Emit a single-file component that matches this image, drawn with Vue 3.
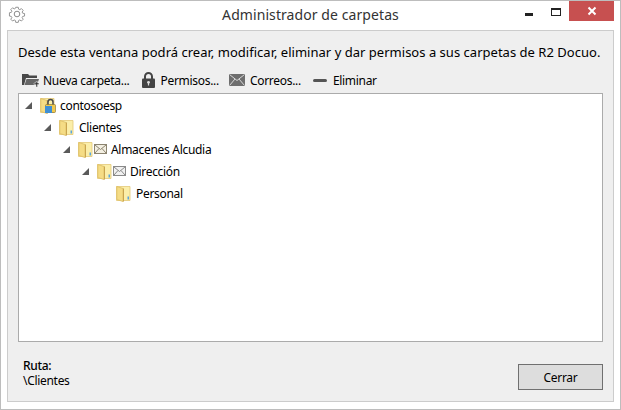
<script setup>
const folders = [
  { name: 'contosoesp', depth: 0, arrow: true, lock: true },
  { name: 'Clientes', depth: 1, arrow: true },
  { name: 'Almacenes Alcudia', depth: 2, arrow: true, mail: 'warm' },
  { name: 'Dirección', depth: 3, arrow: true, mail: 'grey' },
  { name: 'Personal', depth: 4 }
]
</script>

<template>
  <div class="window">
    <header class="titlebar">
      <svg class="gear" width="18" height="18" viewBox="0 0 18 18">
        <path d="M7.6 1.5h2.8l.4 2.1 1.3.6 1.8-1.2 2 2-1.2 1.8.6 1.3 2.1.4v2.8l-2.1.4-.6 1.3 1.2 1.8-2 2-1.8-1.2-1.3.6-.4 2.1H7.6l-.4-2.1-1.3-.6-1.8 1.2-2-2 1.2-1.8-.6-1.3-2.1-.4V7.6l2.1-.4.6-1.3-1.2-1.8 2-2 1.8 1.2 1.3-.6z" fill="none" stroke="#8a8a8a" stroke-linejoin="round" transform="translate(.9 .9) scale(.9)" />
        <circle cx="9" cy="9" r="2.800" fill="none" stroke="#8a8a8a" />
      </svg>
      <h1 class="title">Administrador de carpetas</h1>
      <div class="controls">
        <span class="min"></span>
        <span class="max"></span>
        <button class="close">
          <svg width="10" height="10" viewBox="0 0 10 10">
            <path d="M1.500 1.500l7 7M8.500 1.500l-7 7" stroke="#fff" stroke-width="2" />
          </svg>
        </button>
      </div>
    </header>

    <main class="content">
      <p class="intro">Desde esta ventana podrá crear, modificar, eliminar y dar permisos a sus carpetas de R2 Docuo.</p>

      <div class="toolbar">
        <span class="tool tool-new">
          <svg width="17" height="15" viewBox="0 0 17 15">
            <path d="M0 1h6l1.500 1.500H15V5H4L2 12H0z" fill="#484848" />
            <path d="M4.500 6H17l-2 6H2.500z" fill="#666" />
            <path d="M12 10h2V8.500h1.500V10H17v1.500h-1.500V14H14v-2.500h-2z" fill="#333" stroke="#efefef" stroke-width=".5" />
          </svg>
          Nueva carpeta...
        </span>
        <span class="tool tool-lock">
          <svg width="13" height="16" viewBox="0 0 13 16">
            <path d="M3 7V4.500a3.500 3.500 0 0 1 7 0V7" fill="none" stroke="#444" stroke-width="2" />
            <rect y="6.500" width="13" height="9.500" rx="1" fill="#444" />
            <circle cx="6.500" cy="10.300" r="1.400" fill="#ddd" />
            <rect x="5.900" y="10.500" width="1.200" height="3" fill="#ddd" />
          </svg>
          Permisos...
        </span>
        <span class="tool tool-mail">
          <svg width="16" height="12" viewBox="0 0 16 12">
            <rect width="16" height="12" fill="#6e6e6e" />
            <path d="M.5.5L8 6.500 15.500.5M.5 11.500L6 5M15.500 11.500L10 5" fill="none" stroke="#d8d8d8" />
          </svg>
          Correos...
        </span>
        <span class="tool tool-del">
          <span class="dash"></span>
          Eliminar
        </span>
      </div>

      <div class="tree">
        <div
          v-for="folder in folders"
          :key="folder.name"
          class="row"
          :style="{ paddingLeft: 6 + folder.depth * 19 + 'px' }"
        >
          <span class="arrow-slot">
            <svg v-if="folder.arrow" width="7" height="7" viewBox="0 0 7 7">
              <path d="M7 0v7H0z" fill="#5a5a5a" />
            </svg>
          </span>
          <span class="folder">
            <svg width="15" height="17" viewBox="0 0 15 17">
              <path d="M.5 1.500h13.500v14H.5z" fill="#fbeea9" stroke="#e3c877" stroke-width=".8" />
              <path d="M.8 1.500L7 3.500V16.500L.8 14.500z" fill="#f5dc85" stroke="#dcbd63" stroke-width=".8" />
              <path d="M7.500 3.500v13" stroke="#c9a44f" />
              <rect x="11.500" y="11.500" width="1.500" height="3" fill="#5aa5de" />
            </svg>
            <svg v-if="folder.lock" class="lock" width="11" height="15" viewBox="0 0 11 15">
              <path d="M3 7V4a2.500 2.500 0 0 1 5 0v3" fill="none" stroke="#4a4a4a" stroke-width="1.500" />
              <rect x=".5" y="6.500" width="10" height="8" rx="1" fill="#f2c94c" stroke="#7a6a30" stroke-width=".6" />
              <rect x="0" y="8" width="7" height="7" fill="#3f8fd4" />
            </svg>
          </span>
          <svg v-if="folder.mail" class="mail" width="13" height="10" viewBox="0 0 13 10">
            <rect x=".5" y=".5" width="12" height="9" :fill="folder.mail === 'warm' ? '#f3efe2' : '#f1f1f1'" :stroke="folder.mail === 'warm' ? '#8c8470' : '#8a8a8a'" />
            <path d="M1 1l5.500 4.500L12 1M1 9l4-4.500M12 9L8 4.500" fill="none" :stroke="folder.mail === 'warm' ? '#8c8470' : '#8a8a8a'" />
          </svg>
          <span class="name">{{ folder.name }}</span>
        </div>
      </div>

      <footer class="footer">
        <div class="path">
          <div class="path-label">Ruta:</div>
          <div>\Clientes</div>
        </div>
        <button class="btn">Cerrar</button>
      </footer>
    </main>
  </div>
</template>

<style>
html, body {
  margin: 0;
  background: #fff;
}
</style>

<style scoped>
.window {
  box-sizing: border-box;
  width: 621px;
  height: 410px;
  display: flex;
  flex-direction: column;
  padding: 0 6px 7px;
  background: #fff;
  border: 1px solid #bdbdbd;
  font-family: "Noto Sans", "Open Sans", sans-serif;
  font-size: 12px;
  letter-spacing: -0.3px;
  color: #000;
}

.titlebar {
  height: 29px;
  flex: none;
  display: flex;
  align-items: flex-start;
  position: relative;
  justify-content: center;
}

.gear {
  position: absolute;
  left: 1px;
  top: 4px;
}

.title {
  margin: 4px 0 0;
  font-size: 14px;
  line-height: 20px;
  font-weight: 400;
  letter-spacing: 0.08px;
  color: #333;
}

.controls {
  position: absolute;
  right: 0;
  top: 0;
  height: 20px;
  display: flex;
  align-items: flex-start;
}

.min {
  width: 8px;
  height: 3px;
  margin: 12px 18px 0 0;
  background: #222;
}

.max {
  box-sizing: border-box;
  width: 10px;
  height: 8px;
  margin: 7px 8px 0 0;
  border: 1px solid #222;
  border-top-width: 2px;
}

.close {
  width: 45px;
  height: 20px;
  padding: 0;
  border: 0;
  background: #c75050;
  display: flex;
  align-items: center;
  justify-content: center;
}

.content {
  flex: 1;
  min-height: 0;
  box-sizing: border-box;
  display: flex;
  flex-direction: column;
  padding: 0 10px;
  background: #efefef;
  border: 1px solid #ccc;
}

.intro {
  margin: 12px 0 0;
  font-size: 13px;
  line-height: 18px;
  letter-spacing: 0.02px;
  white-space: nowrap;
}

.toolbar {
  display: flex;
  align-items: center;
  height: 22px;
  margin: 8px 0 2px;
  padding-left: 4px;
}

.tool {
  display: flex;
  align-items: center;
  white-space: nowrap;
}

.tool-new { margin-right: 12px; gap: 4px; }
.tool-lock { margin-right: 10px; gap: 6px; }
.tool-mail { margin-right: 12px; gap: 5px; }
.tool-del { gap: 6px; }

.dash {
  width: 14px;
  height: 3px;
  border-radius: 2px;
  background: #555;
}

.tree {
  box-sizing: border-box;
  height: 249px;
  flex: none;
  background: #fff;
  border: 1px solid #ababab;
}

.row {
  height: 22px;
  display: flex;
  align-items: center;
}

.arrow-slot {
  width: 15px;
  flex: none;
  display: flex;
}

.folder {
  position: relative;
  width: 20px;
  flex: none;
  display: flex;
}

.lock {
  position: absolute;
  left: 5px;
  top: 1px;
}

.mail {
  margin: 0 4px 0 -4px;
}

.name {
  white-space: nowrap;
}

.footer {
  flex: 1;
  display: flex;
  justify-content: space-between;
  align-items: flex-end;
  padding-bottom: 11px;
}

.path {
  margin: 0 0 2px 5px;
  line-height: 15px;
}

.path-label {
  font-weight: 500;
}

.btn {
  box-sizing: border-box;
  width: 85px;
  height: 26px;
  padding: 0;
  background: #ddd;
  border: 1px solid #707070;
  font: inherit;
  letter-spacing: -0.3px;
  color: #000;
}
</style>
